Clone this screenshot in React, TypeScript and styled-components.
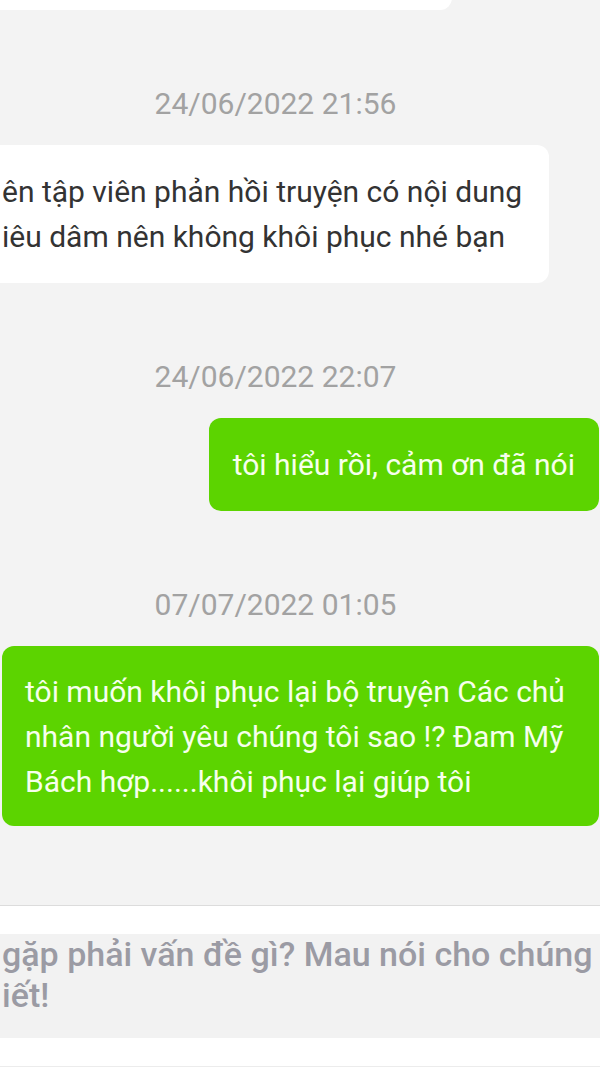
import React from "react";
import styled, { createGlobalStyle } from "styled-components";

const GlobalStyle = createGlobalStyle`
  html, body { margin: 0; padding: 0; }
  body {
    background: #f3f3f3;
    font-family: Roboto, "Noto Sans", "DejaVu Sans", sans-serif;
  }
`;

const Screen = styled.div`
  width: 600px;
  height: 1067px;
  display: flex;
  flex-direction: column;
  overflow: hidden;
  background: #f3f3f3;
`;

const ChatArea = styled.div`
  flex: 1;
  min-height: 0;
  display: flex;
  flex-direction: column;
  padding-right: 1px;
  overflow: hidden;
`;

const PrevBubble = styled.div`
  flex-shrink: 0;
  width: 452px;
  height: 30px;
  margin-top: -20px;
  background: #ffffff;
  border-radius: 0 0 12px 0;
`;

const Group = styled.div`
  display: flex;
  flex-direction: column;
  padding-top: 76px;
  gap: 23px;
  flex-shrink: 0;
`;

const Timestamp = styled.div`
  text-align: center;
  padding-right: 48px;
  font-size: 30px;
  line-height: 36px;
  color: #a2a2a2;
`;

type BubbleProps = { $mine?: boolean; $wide?: boolean; $clipped?: boolean };

const Bubble = styled.div<BubbleProps>`
  font-size: 30px;
  line-height: 45px;
  padding: ${(p) => (p.$clipped ? "24px 27px 24px 2px" : p.$wide ? "23px 24px 22px 23px" : "24px")};
  border-radius: ${(p) => (p.$clipped ? "0 12px 12px 0" : "12px")};
  background: ${(p) => (p.$mine ? "#5cd400" : "#ffffff")};
  color: ${(p) => (p.$mine ? "#f6ffec" : "#333333")};
  align-self: ${(p) => (p.$wide ? "stretch" : p.$mine ? "flex-end" : "flex-start")};
  margin-left: ${(p) => (p.$wide ? "2px" : "0")};
  white-space: nowrap;
`;

const InputBar = styled.div`
  flex-shrink: 0;
  background: #ffffff;
  border-top: 1px solid #dcdcdc;
  border-bottom: 1px solid #ececec;
  padding: 28px 0 28px;
`;

const InputBox = styled.div`
  height: 104px;
  background: #f2f2f2;
  padding-left: 2px;
  font-size: 34px;
  line-height: 41px;
  font-weight: 500;
  color: #9b9ba4;
  overflow: hidden;
`;

const InputLine = styled.div`
  white-space: nowrap;
  overflow: hidden;
`;

export default function App() {
  return (
    <>
      <GlobalStyle />
      <Screen>
        <ChatArea>
          <PrevBubble />
          <Group>
            <Timestamp>24/06/2022 21:56</Timestamp>
            <Bubble $clipped>
              ên tập viên phản hồi truyện có nội dung
              <br />
              iêu dâm nên không khôi phục nhé bạn
            </Bubble>
          </Group>
          <Group>
            <Timestamp>24/06/2022 22:07</Timestamp>
            <Bubble $mine>tôi hiểu rồi, cảm ơn đã nói</Bubble>
          </Group>
          <Group>
            <Timestamp>07/07/2022 01:05</Timestamp>
            <Bubble $mine $wide>
              tôi muốn khôi phục lại bộ truyện Các chủ
              <br />
              nhân người yêu chúng tôi sao !? Đam Mỹ
              <br />
              Bách hợp......khôi phục lại giúp tôi
            </Bubble>
          </Group>
        </ChatArea>
        <InputBar>
          <InputBox>
            <InputLine>gặp phải vấn đề gì? Mau nói cho chúng tôi</InputLine>
            <InputLine>iết!</InputLine>
          </InputBox>
        </InputBar>
      </Screen>
    </>
  );
}
